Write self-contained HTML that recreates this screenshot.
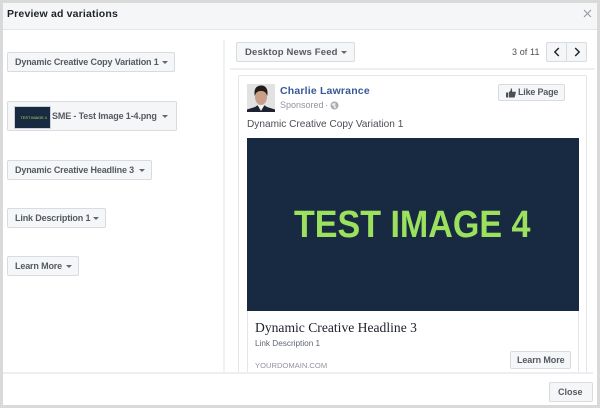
<!DOCTYPE html>
<html>
<head>
<meta charset="utf-8">
<style>
html,body{margin:0;padding:0;background:#d9d9d9;}
body{width:600px;height:408px;position:relative;overflow:hidden;font-family:"Liberation Sans",sans-serif;}
#w{position:absolute;left:0;top:0;width:600px;height:408px;background:#d9d9d9;filter:blur(.3px);}
.a{position:absolute;}
.t{position:absolute;white-space:nowrap;}
.btn{position:absolute;box-sizing:border-box;background:#f5f6f7;border:1px solid #d8dbdf;border-radius:2px;height:20px;color:#555a62;font-weight:bold;font-size:9px;line-height:19px;padding-left:7px;letter-spacing:-.15px;white-space:nowrap;}
.car{position:absolute;width:0;height:0;border-left:3px solid transparent;border-right:3px solid transparent;border-top:3.5px solid #606770;}
</style>
</head>
<body>
<div id="w">
<div class="a" style="left:3px;top:3px;width:594px;height:402px;background:#fff;"></div>
<div class="a" style="left:3px;top:3px;width:594px;height:26px;background:#f5f6f7;border-bottom:1px solid #e5e5e5;"></div>
<div class="t" style="left:7px;top:8px;font-size:10.5px;line-height:13px;font-weight:bold;color:#1d2129;letter-spacing:.17px;">Preview ad variations</div>
<svg class="a" style="left:583px;top:9px" width="9" height="9" viewBox="0 0 9 9"><path d="M1 1L8 8M8 1L1 8" stroke="#90949c" stroke-width="1" fill="none"/></svg>

<div class="btn" style="left:7px;top:52px;width:168px;">Dynamic Creative Copy Variation 1<span class="car" style="left:154px;top:8px"></span></div>
<div class="btn" style="left:7px;top:101px;width:170px;height:30px;line-height:28px;"><span class="a" style="left:7px;top:5px;width:35px;height:21px;background:#182a42;box-shadow:0 0 0 1px #ccd0d6;"><span class="t" style="left:5.500px;top:8px;font-size:4px;line-height:5px;color:#9be15d;letter-spacing:-.1px;font-weight:normal;">TEST IMAGE 4</span></span><span style="margin-left:37px;">SME - Test Image 1-4.png</span><span class="car" style="left:154px;top:13px"></span></div>
<div class="btn" style="left:7px;top:160px;width:145px;">Dynamic Creative Headline 3<span class="car" style="left:131px;top:8px"></span></div>
<div class="btn" style="left:7px;top:208px;width:99px;">Link Description 1<span class="car" style="left:85px;top:8px"></span></div>
<div class="btn" style="left:7px;top:256px;width:72px;">Learn More<span class="car" style="left:58px;top:8px"></span></div>

<div class="a" style="left:223px;top:40px;width:2px;height:333px;background:#f0f1f3;"></div>

<div class="btn" style="left:236px;top:42px;width:119px;font-size:9.5px;letter-spacing:.17px;padding-left:8px;">Desktop News Feed<span class="car" style="left:104px;top:8px"></span></div>
<div class="t" style="left:512px;top:46px;font-size:9px;line-height:12px;color:#4b4f56;letter-spacing:.1px;">3 of 11</div>
<div class="btn" style="left:546px;top:42px;width:41px;padding:0;">
  <span class="a" style="left:19px;top:0;width:1px;height:18px;background:#d8dbdf;"></span>
  <svg class="a" style="left:6px;top:4px" width="8" height="10" viewBox="0 0 8 10"><path d="M5.800 1L1.800 5L5.800 9" stroke="#1d2129" stroke-width="1.4" fill="none"/></svg>
  <svg class="a" style="left:26px;top:4px" width="8" height="10" viewBox="0 0 8 10"><path d="M2.200 1L6.200 5L2.200 9" stroke="#1d2129" stroke-width="1.4" fill="none"/></svg>
</div>
<div class="a" style="left:230px;top:68px;width:365px;height:2px;background:#eeeff1;"></div>

<div class="a" style="left:238px;top:75px;width:349px;height:298px;box-sizing:border-box;border:1px solid #e4e6e9;border-bottom:0;border-radius:2px 2px 0 0;"></div>

<svg class="a" style="left:247px;top:84px" width="28" height="28" viewBox="0 0 28 28">
  <rect width="28" height="28" fill="#e2e2e2"/>
  <path d="M0 28V25.500L8 23L11 21H17L20 23L28 25.500V28Z" fill="#1d2230"/>
  <path d="M10.500 21L14 27L17.500 21Z" fill="#f1f1f1"/>
  <ellipse cx="14" cy="13" rx="6" ry="8" fill="#c99f88"/>
  <path d="M7.800 12C6.500 4 10 1.500 14.500 1.500C19 1.500 21.500 5.500 20.200 12C19 8 17 7 14 7C11 7 9 8 7.800 12Z" fill="#241c18"/>
</svg>
<div class="t" style="left:280px;top:85px;font-size:10.5px;line-height:13px;font-weight:bold;color:#365899;letter-spacing:.18px;">Charlie Lawrance</div>
<div class="t" style="left:280px;top:99px;font-size:9px;line-height:12px;color:#90949c;">Sponsored</div>
<div class="t" style="left:325px;top:99px;font-size:9px;line-height:12px;color:#90949c;">·</div>
<svg class="a" style="left:330px;top:101px" width="9" height="9" viewBox="0 0 9 9"><circle cx="4.500" cy="4.500" r="4" fill="#a8abb1"/><path d="M3 2L6 2.500L5 4.500L6.500 6.500L4.500 7.500L3.500 5L1.500 4Z" fill="#e9eaec"/></svg>

<div class="btn" style="left:498px;top:84px;width:67px;height:17px;line-height:15px;padding-left:19px;letter-spacing:-.2px;">Like Page
  <svg class="a" style="left:7px;top:3px" width="10" height="10" viewBox="0 0 10 10"><path d="M0 4.500H2V9.500H0ZM2.700 9.500V4.500L4.800 2.300V0.300C6 0.300 6.400 1.500 6 3.800H9.300C10 3.800 10 4.600 9.700 5L8.800 9C8.700 9.300 8.500 9.500 8 9.500Z" fill="#4b4f56"/></svg>
</div>

<div class="t" style="left:247px;top:118px;font-size:10.1px;line-height:13px;color:#4b4f56;">Dynamic Creative Copy Variation 1</div>

<div class="a" style="left:247px;top:138px;width:332px;height:173px;background:#182a42;"></div>
<div class="t" style="left:294px;top:202px;font-size:38px;line-height:46px;font-weight:bold;color:#9be15d;transform-origin:0 0;transform:scaleX(0.896);">TEST IMAGE 4</div>
<div class="a" style="left:247px;top:311px;width:332px;height:62px;box-sizing:border-box;border:1px solid #e4e6e9;border-top:0;border-bottom:0;"></div>
<div class="t" style="left:255px;top:319px;font-family:'Liberation Serif',serif;font-size:13.600px;line-height:17px;color:#1d2129;">Dynamic Creative Headline 3</div>
<div class="t" style="left:255px;top:338px;font-size:8.200px;line-height:11px;color:#606770;">Link Description 1</div>
<div class="t" style="left:255px;top:360px;font-size:7.600px;line-height:11px;color:#90949c;">YOURDOMAIN.COM</div>
<div class="btn" style="left:510px;top:351px;width:61px;height:18px;line-height:17px;padding-left:6px;letter-spacing:-.1px;">Learn More</div>

<div class="a" style="left:3px;top:374px;width:594px;height:31px;background:#fff;"></div>
<div class="a" style="left:3px;top:372px;width:590px;height:2px;background:#eceef0;"></div>
<div class="btn" style="left:549px;top:382px;width:44px;padding-left:8px;letter-spacing:0;">Close</div>
</div>
</body>
</html>
